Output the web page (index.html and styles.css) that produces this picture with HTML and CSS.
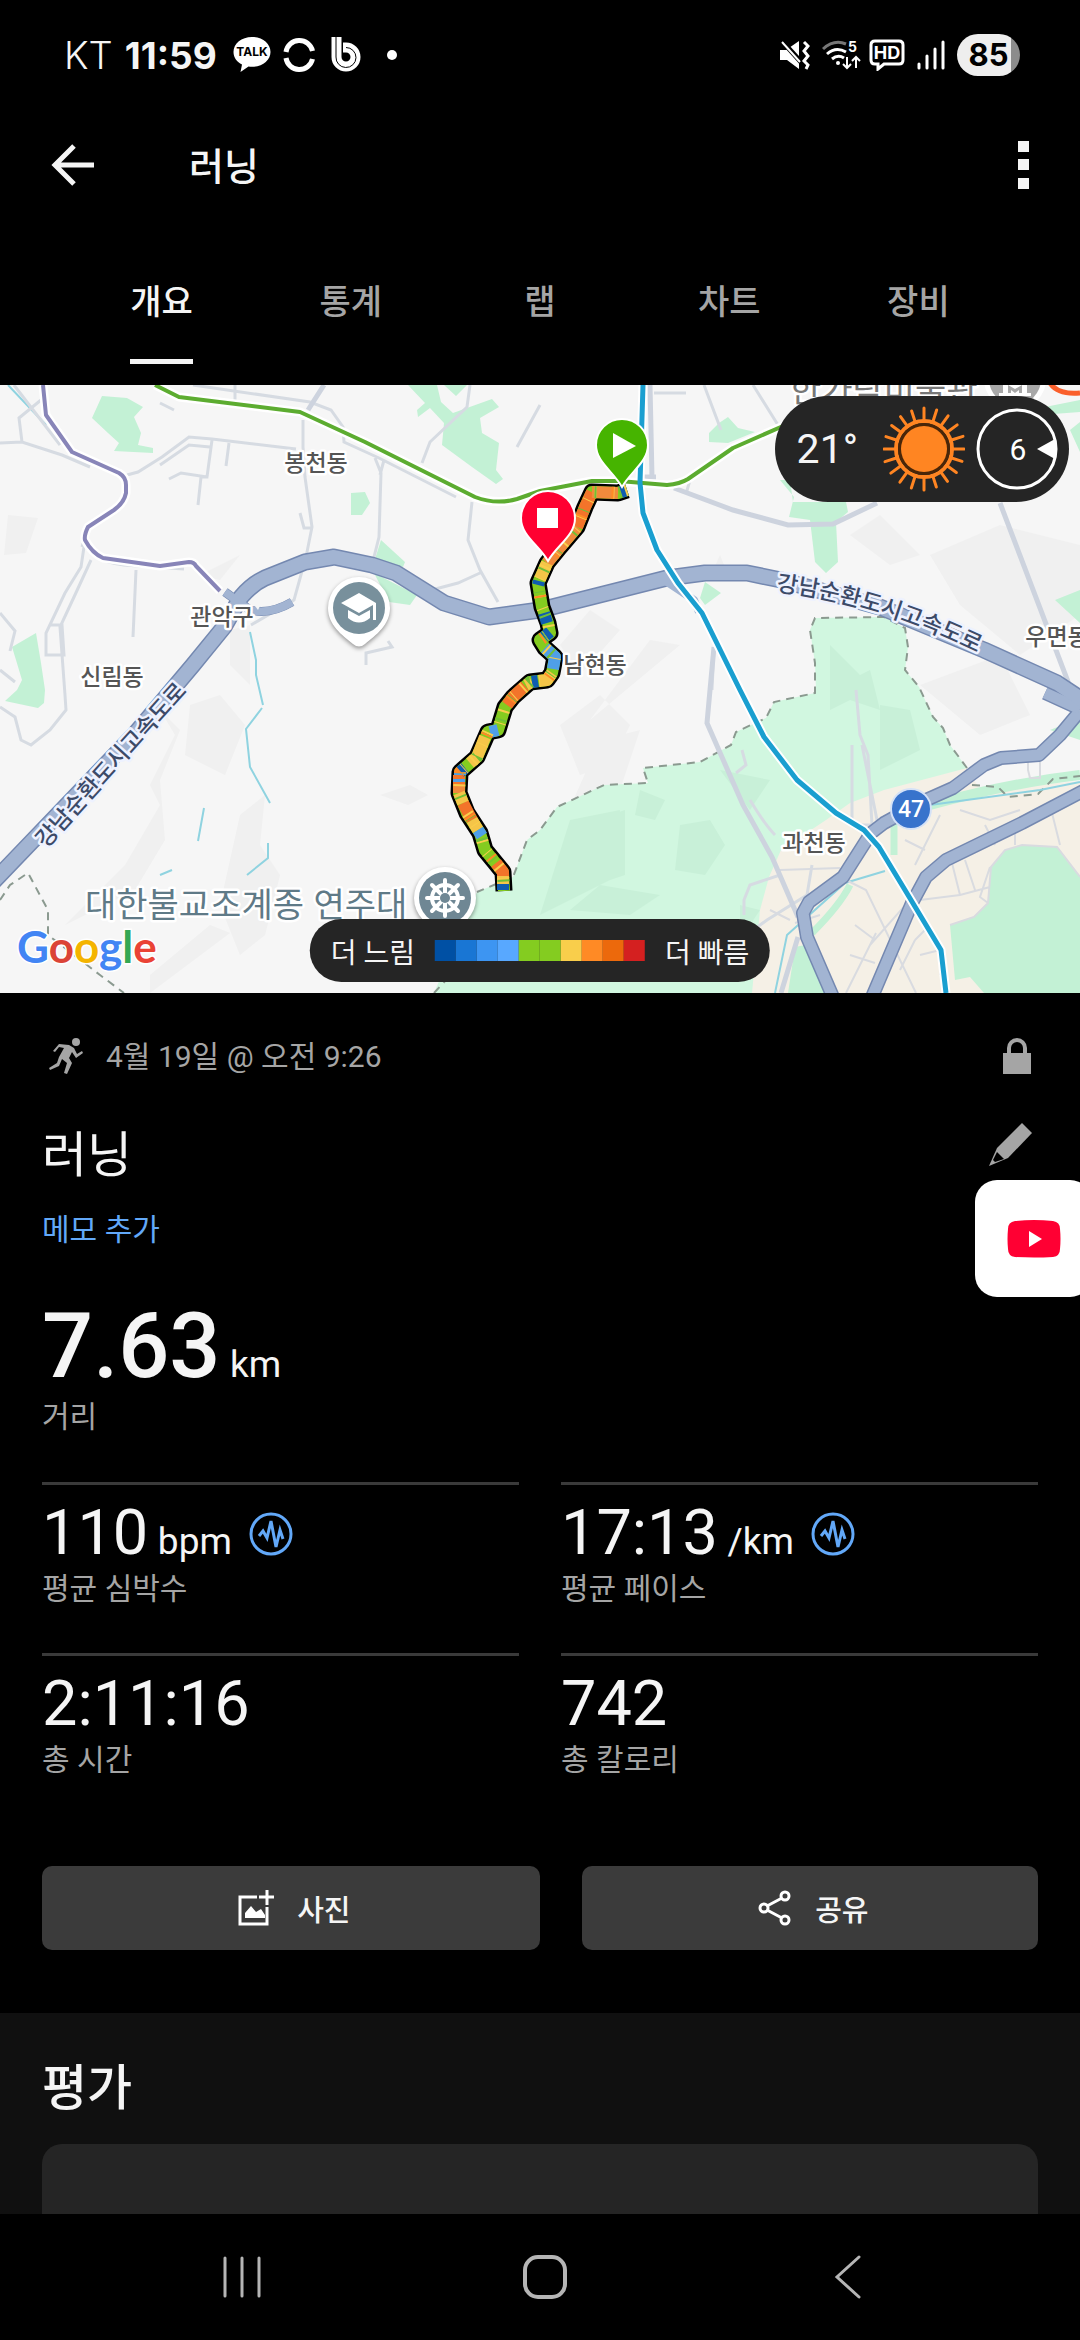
FILE: index.html
```html
<!DOCTYPE html>
<html lang="ko">
  <head>
    <meta charset="UTF-8" />
    <meta name="viewport" content="width=device-width, initial-scale=1.0" />
    <link rel="stylesheet" href="styles.css">
    <title>러닝</title>
  </head>
  <body>
    <div class="status">
      <span class="carrier">KT</span>
      <span class="clock">11:59</span>
      <svg class="talk" width="38" height="38" viewBox="0 0 38 38">
        <path d="M19 1C8.500 1 0.500 7.500 0.500 16c0 5.500 3.500 10 8.500 12.500L7.500 36l8-5.500c1 .2 2.300.3 3.500.3 10.500 0 18.500-6.500 18.500-14.800S29.500 1 19 1z" fill="#fff" />
        <text x="19" y="20" text-anchor="middle" class="talk-text">TALK</text>
      </svg>
      <svg width="32" height="34" viewBox="0 0 32 34" fill="none" stroke="#fff" stroke-width="5">
        <path d="M3 14A13.500 13.500 0 0 1 29.500 13" />
        <path d="M3 20A13.500 13.500 0 0 0 29.500 21" />
      </svg>
      <svg class="app-b" width="30" height="36" viewBox="0 0 30 36" fill="none">
        <path d="M5.500 0V20A9.500 9.500 0 1 0 15 10.500H12" stroke="#fff" stroke-width="10" />
        <path d="M5 0V20A10 10 0 1 0 15 10.500" stroke="#000" stroke-width="1" />
        <circle cx="15" cy="21" r="3" fill="#000" />
      </svg>
      <span class="more-dot"></span>
      <span class="spacer"></span>
      <svg width="30" height="30" viewBox="0 0 30 30" fill="#fff">
        <path d="M0 10h6l13-9v28L7 20H0z" />
        <path d="M1 0l20 22" stroke="#000" stroke-width="5" />
        <path d="M2 2l18 20" stroke="#fff" stroke-width="2" />
        <path d="M24 2l4 4-4 5 4 5-4 5 4 4-2 4" stroke="#fff" stroke-width="3" fill="none" />
      </svg>
      <svg class="wifi" width="40" height="30" viewBox="0 0 40 30" fill="none" stroke="#fff" stroke-width="3">
        <path d="M1 9Q12-1 24 4" stroke="#777" />
        <path d="M5 14Q14 6 24 12" />
        <path d="M10 19Q16 14 22 18" />
        <circle cx="16" cy="23" r="2" fill="#fff" stroke="none" />
        <path d="M25 17v11M21 24l4 4 4-4M34 28V17M30 21l4-4 4 4" stroke-width="2" />
        <text x="26" y="12" class="wifi-text">5</text>
      </svg>
      <svg width="36" height="32" viewBox="0 0 36 32" fill="none" stroke="#fff" stroke-width="3">
        <path d="M6 2h24q4 0 4 4v15q0 4-4 4H15l-6 5v-5H6q-4 0-4-4V6q0-4 4-4z" />
        <text x="18" y="20" text-anchor="middle" class="hd-text">HD</text>
      </svg>
      <svg class="signal" width="28" height="30" viewBox="0 0 28 30" stroke="#fff" stroke-width="3" stroke-linecap="round">
        <path d="M2 24v4M10 16v12M18 9v19M26 2v26" />
      </svg>
      <span class="battery">85</span>
    </div>

    <header class="appbar">
      <button class="icon-btn" aria-label="뒤로">
        <svg width="44" height="42" viewBox="0 0 44 42" fill="none" stroke="#f5f5f5" stroke-width="5">
          <path d="M43 21H4M23 2L4 21l19 19" />
        </svg>
      </button>
      <h1>러닝</h1>
      <button class="icon-btn" aria-label="메뉴">
        <svg width="11" height="48" viewBox="0 0 11 48" fill="#f5f5f5">
          <path d="M0 0h11v11H0zM0 18h11v11H0zM0 37h11v11H0z" />
        </svg>
      </button>
    </header>

    <nav class="tabs">
      <a href="#overview" class="active">개요</a>
      <a href="#stats">통계</a>
      <a href="#laps">랩</a>
      <a href="#charts">차트</a>
      <a href="#gear">장비</a>
    </nav>

    <div class="map">
      <svg class="map-canvas" viewBox="0 0 1080 608">
        <defs>
          <path id="highway" d="M-8 498L134 350 193 280 224 242 241 212Q252 199 265 193L305 177 334 172 372 180 396 188 444 218 489 232 540 225 667 193 705 188 747 188 781 195 880 222 984 265 1057 298 1090 320" />
          <path id="route-line" d="M627 105L618 108 592 107 585 122 577 142 560 162 547 178 538 198 542 222 548 238 550 248 540 255 545 263 555 272 552 288 547 295 530 297 513 312 505 322 498 345 488 347 477 372 460 387 459 408 467 428 480 448 485 465 503 487 504 506" />
          <path id="label-east" d="M776 206Q880 218 994 276" />
          <path id="label-west" d="M46 464L208 284" />
        </defs>
        <rect width="1080" height="608" fill="#f6f6f6" />

        <!-- terrain -->
        <g fill="#f0f0f0">
          <path d="M8 130l30 3-12 35-22 2zM240 170l-40 20 20 5zM160 325l15 25-25 50 10 20-35 60-60 60 20-10 50-25 30-50-5-60 20-50zM190 320l30-10 25 30-20 50-40-20zM240 430l25-20-5 50 20 30-15 60-25 20-20-50zM380 410l30-10 18 10-20 10zM560 340l40-30 30 30-20 40-30 10zM600 355l40-10-20 60-60 40zM680 260l-30-5-60 80zM930 170l70-30 80 20v70l-60 40-60-50zM850 150l30-20 40 40-30 10zM560 260l30-35 30 20-40 45zM920 300l80-30 30 60-50 20zM150 590l60-50 20 8-80 60zM230 245l20-5v60l-20-20zM720 170l10 25-20-3z" />
        </g>

        <!-- parks and built-up area -->
        <g fill="#c3f1d5">
          <path d="M102 11l25 2 16 9-9 10 7 16-3 12 15 3v5l-39-2 5-8-11-10-16-15zM408 0h29l4 17 12 11 39-14 7 8-19 11 2 15 17 10-3 27 7 9-7 5-24-17-30-22 2-22-14-15-12 9-1-7 8-7zM444 0h23l-11 11zM351 108l14-1 5 11-8 12h-11zM381 155l24 22-2 5-28-8zM374 188l43 22-7 10-21-3zM12 262l24-14 5 30 4 27-1 13-6 5-33-7 12-11 5-10-6-20zM709 48l10-10 9-6 10 11 17 4-27 11-19-1zM780 95h10l3 22h53l2 10-12 10 2 40-12 11-11-11-5-42-21-3 5-20zM705 197l16 11-16 12-5-7zM1055 215l25-10v33zM1070 45l10-8v30zM1030 25l50-10v12l-40 3z" />
        </g>
        <path d="M815 233L884 232 905 243 908 262 905 285 919 302 933 332 943 343 950 360 967 383V608H434L477 507 513 492 527 455 540 445 557 422 604 400 648 398 643 383 700 377 731 360 736 347 766 333 774 317 815 308 816 305 815 278 810 245z" fill="#d1f7e0" />
        <g fill="#c8f0d8">
          <path d="M570 435l50-10-10 70-70 35zM610 430l15-5v65l-15 5zM680 440l30-5 15 25-20 30-30-5zM640 405l25 10-10 20-20-5zM600 500l60 10-30 20-60-5zM740 520l20 5-20 30zM880 320l30 5 10 40-40 20zM720 385l50 10-20 30zM830 260l30 30 10-5 10 40-30-10-20 10z" />
        </g>
        <path d="M967 383L884 405 850 418 826 435 781 465 769 492 760 525 752 608H1090V395L980 405z" fill="#f5f0e6" />
        <path d="M1080 492L1057 462 1022 460 1005 465 991 482 988 518 974 532 950 540 955 595 970 592 984 608H1080z" fill="#c3f1d5" />
        <path d="M795 562l20-4 18 50h-45z" fill="#c3f1d5" />
        <path d="M930 420Q1010 398 1080 390" stroke="#c3f1d5" stroke-width="10" fill="none" />
        <path d="M812 548Q840 520 850 500M894 438v32" stroke="#c3f1d5" stroke-width="7" fill="none" />
        <path d="M1050 345l30-12v22z" fill="#c3f1d5" />
        <g fill="none" stroke="#8b9a90" stroke-width="2" stroke-dasharray="8 6">
          <path d="M967 383L950 360 943 343 933 332 919 302 905 285 908 262 905 243 884 232 815 233 810 245 815 278 815 308 774 317 766 333 736 347 731 360 700 377 643 383 648 398 604 400 557 422 540 445 527 455 513 492 477 507M434 608L460 580M0 515L10 500 28 488 48 525 48 550 100 590 124 608M972 400l26 2 10 10 30-3 15-15 27-3" />
        </g>

        <!-- streams -->
        <g fill="none" stroke="#8fd3e0" stroke-width="2">
          <path d="M8 0L46 40M250 247l6 28v15l7 30M262 323l-16 21 4 38 20 36M204 423l-6 33M268 458v15l-21 17M172 485l-12 5M1080 397L1040 405 930 420M775 608l12-58 58-52 40-12" />
        </g>

        <!-- minor roads -->
        <g fill="none" stroke="#d6dbe2" stroke-width="3">
          <path d="M0 58L22 57 62 70 90 82M41 15L19 33 22 57M14 0L60 60M127 90L138 87 162 72 189 52 212 54 296 64M212 55L207 92 201 92 198 120M169 94L181 88 207 92M160 80L189 60 210 62M229 58L226 81M160 18l14 7" />
          <path d="M303 35L303 62 305 92 312 142 306 172 294 215 251 240M193 0L310 17 331 25 343 42 344 57 379 73 456 112M235 0v15M375 73L381 88 379 152 370 188M384 75L380 90M470 0L467 22 430 57 422 78M540 20L517 62M472 117L468 155 480 185 498 217M480 188L458 198 424 207M300 128l4 15h9" />
          <path d="M84 162L81 182 65 208 46 248V270H64L62 240H50M91 175L74 212 60 242 65 310 66 325 50 345 31 360 21 355 15 332 0 322M136 185L133 252M88 142l-6 20M0 228l15 18-5 20M0 285l15 12M366 280v-12l26-6-4-6M84 150q0 25 40 30l60 4" />
          <path d="M654 8h32M704 0L721 45M753 0L778 40M690 95l-4 14M714 262l-2 43M856 305l4 45 8 20 4 70M852 360v80M862 360l16 80M850 440h26M742 365l4 15-10 8M750 415q15 25 25 35M780 490l-30 10-6 15v15M812 480l-5 30-40 25-14 10" />
        </g>
        <g fill="none" stroke="#d9dbe0" stroke-width="2">
          <path d="M846 495l20 10 50 103M920 515l40-5 30-8M870 560l40-45 20-30M846 608l30-60M905 455l20 10M940 430l-25 50M950 470l10 40M985 440l10 20M960 425l30 10 30-10M1015 435v25M1050 420l10 40M965 475l10 30M780 485l60-2M770 525l20 10M820 530l-25 8M855 540l20 15M850 570l25 8M915 555l15-15M920 570l20-5v25M900 585l15-30M1028 385v-10h12v18h-10zM990 482l-10 30 8 6M950 540l24-8 14-14 3-36 14-17 17-5 35 2 23 30" />
        </g>

        <!-- main roads -->
        <g fill="none" stroke="#cdd3de" stroke-width="5">
          <path d="M324 0L308 25M650 0L652 92M674 103L733 125 788 140 833 139 877 118M1000 118L1070 302 1080 315M710 305L707 338 743 420 772 472 798 532M798 552L781 608M714 262L710 305M656 92h-12" />
        </g>

        <!-- expressways -->
        <g fill="none" stroke-linejoin="round">
          <g stroke="#7488b0" stroke-width="14">
            <path d="M1080 326L1060 350 1039 370 1001 373 984 380 953 403 926 415 884 438 871 448 843 492 809 517 803 528 807 552 833 612" />
            <path d="M1085 405L1022 438 946 475 926 492 912 518 872 612M1045 308l35 16" />
            <path d="M225 207l25 18M250 225q20 5 42-8" stroke-width="9" />
            <use href="#highway" stroke-width="17" />
          </g>
          <g stroke="#a2b4d2" stroke-width="11">
            <path d="M1080 326L1060 350 1039 370 1001 373 984 380 953 403 926 415 884 438 871 448 843 492 809 517 803 528 807 552 833 612" />
            <path d="M1085 405L1022 438 946 475 926 492 912 518 872 612M1045 308l35 16" />
            <path d="M225 207l25 18M250 225q20 5 42-8M664 195l30 20 5 12" stroke-width="8" />
            <use href="#highway" stroke-width="14" />
          </g>
        </g>
        <path d="M252 217l10 0-4 8z" fill="#f6f6f6" />

        <!-- subway lines -->
        <g fill="none" stroke-linejoin="round">
          <g stroke="#fff" stroke-width="9">
            <path d="M43 0L46 30 72 67 119 88Q126 92 126 100V108Q124 118 114 125L88 142Q84 150 85 155 92 168 103 173L160 181 189 177Q194 177 196 181L220 206" />
            <path d="M155 0L179 12 300 27 365 57 475 112Q496 120 517 114L540 106 592 96H619L667 100Q680 99 688 94L733 63 790 38" />
            <path d="M643 0L640 98 643 128 657 165 678 198 702 228 740 305 764 352 797 395 836 428 864 445 879 462 905 505 941 565 946 608" />
          </g>
          <path d="M43 0L46 30 72 67 119 88Q126 92 126 100V108Q124 118 114 125L88 142Q84 150 85 155 92 168 103 173L160 181 189 177Q194 177 196 181L220 206" stroke="#8885b8" stroke-width="4" />
          <path d="M155 0L179 12 300 27 365 57 475 112Q496 120 517 114L540 106 592 96H619L667 100Q680 99 688 94L733 63 790 38" stroke="#5cac30" stroke-width="4" />
          <path d="M643 0L640 98 643 128 657 165 678 198 702 228 740 305 764 352 797 395 836 428 864 445 879 462 905 505 941 565 946 608" stroke="#1a9fd0" stroke-width="5" />
          <path d="M1050-2Q1058 10 1080 8" stroke="#fa5f2b" stroke-width="5" />
        </g>

        <!-- recorded track coloured by pace -->
        <g fill="none" stroke-linejoin="round">
          <use href="#route-line" stroke="#000" stroke-width="17" />
          <use href="#route-line" stroke="#84cc20" stroke-width="12" />
          <g stroke="#f3742a" stroke-width="12">
            <path d="M592 107L585 122 577 142M525 301L513 312 507 320M459 390V400M463 418L472 435M496 478L503 487V491" />
            <path d="M618 108L592 107M577 142L560 162 547 178M459 400V408" stroke="#f08a3c" />
          </g>
          <path d="M547 178L540 194M552 288L547 295 539 296M532 297L526 300M459 408L463 418M472 435L478 445M503 491V499M485 352L477 372 470 378" stroke="#f5c548" stroke-width="12" />
          <path d="M539 196L538 200M544 228L547 238M550 247L544 252M538 296L532 297M465 383L460 387M503 499V505M627 105L621 107" stroke="#0f5cb0" stroke-width="12" />
          <path d="M545 263L555 272 553 284M498 345L490 347M460 387V390M478 445L482 451M459 394V397" stroke="#4f9fe8" stroke-width="12" />
          <use href="#route-line" stroke="#f9ce4b" stroke-width="12" stroke-dasharray="2 11 1 17" />
          <use href="#route-line" stroke="#6fbf36" stroke-width="12" stroke-dasharray="0 7 1 23 2 15" />
          <use href="#route-line" stroke="#ff8a25" stroke-width="12" stroke-dasharray="0 14 2 31" />
        </g>

        <!-- place names -->
        <g class="place">
          <text x="316" y="86">봉천동</text>
          <text x="222" y="240">관악구</text>
          <text x="112" y="300">신림동</text>
          <text x="595" y="288">남현동</text>
          <text x="814" y="466">과천동</text>
          <text x="1057" y="260">우면동</text>
        </g>
        <text class="road"><textPath href="#label-east">강남순환도시고속도로</textPath></text>
        <text class="road"><textPath href="#label-west">강남순환도시고속도로</textPath></text>
        <text x="85" y="532" class="poi">대한불교조계종 연주대</text>
        <text x="790" y="17" class="poi museum">한가람미술관</text>

        <!-- museum -->
        <circle cx="1015" cy="-6" r="31" fill="#fff" />
        <circle cx="1015" cy="-6" r="26" fill="#a8a8a8" />
        <path d="M1003-6h24v14h4v3h-32V8h4zM1008 8V0l7 4 7-4v8h-3V5l-4 3-4-3v3z" fill="#fff" fill-rule="evenodd" />

        <!-- university -->
        <path d="M359 192a31 31 0 0 1 31 31c0 17-14 27-25 36q-6 5-12 0c-11-9-25-19-25-36a31 31 0 0 1 31-31z" fill="#fff" class="shadow" />
        <circle cx="359" cy="223" r="26" fill="#78909c" />
        <path d="M359 208l-18 10 18 10 14-8v15h3v-17zM348 225v8q11 9 22 0v-8l-11 6z" fill="#fff" />

        <!-- temple -->
        <circle cx="445" cy="513" r="31" fill="#fff" class="shadow" />
        <circle cx="445" cy="513" r="26" fill="#6f8794" />
        <g fill="none" stroke="#fff" stroke-width="4">
          <circle cx="445" cy="513" r="13" />
          <path d="M445 495v36M427 513h36M432 500l26 26M432 526l26-26" stroke-linecap="round" />
        </g>
        <circle cx="445" cy="513" r="5" fill="#6f8794" />

        <circle cx="911" cy="424" r="20" fill="#3873cc" stroke="#d5e2f7" stroke-width="2" />
        <text x="911" y="432" class="shield">47</text>

        <!-- start and finish -->
        <path d="M622 102C613 86 596 77 596 60a26 26 0 0 1 52 0c0 17-17 26-26 42z" fill="#46b400" stroke="#fff" stroke-width="2" />
        <path d="M613 48v25l23-12z" fill="#fff" />
        <path d="M548 176C539 160 521 151 521 133a27 27 0 0 1 54 0c0 18-18 27-27 43z" fill="#ff0031" stroke="#fff" stroke-width="2" />
        <path d="M537 123h21v20h-21z" fill="#fff" />

        <text x="17" y="578" class="google"><tspan fill="#4285f4">G</tspan><tspan fill="#db4437">o</tspan><tspan fill="#f4b400">o</tspan><tspan fill="#4285f4">g</tspan><tspan fill="#34a853">l</tspan><tspan fill="#ea4335">e</tspan></text>
      </svg>

      <div class="weather">
        <span>21°</span>
        <svg width="82" height="86" viewBox="-41 -43 82 86">
          <g stroke="#ff8522" stroke-width="3" stroke-linecap="round">
            <path id="ray" d="M0-29V-41M0 29V41M29 0H40M-29 0H-40" />
            <use href="#ray" transform="rotate(18)" />
            <use href="#ray" transform="rotate(36)" />
            <use href="#ray" transform="rotate(54)" />
            <use href="#ray" transform="rotate(72)" />
          </g>
          <circle r="28" fill="none" stroke="#ff8522" stroke-width="4" />
          <circle r="26" fill="#4a2608" />
          <circle r="23" fill="#ff8522" />
        </svg>
        <svg width="82" height="82" viewBox="-41 -41 82 82">
          <circle r="39" fill="none" stroke="#fff" stroke-width="3" />
          <path d="M20 0l18-10v20z" fill="#fff" />
          <text x="1" y="11" class="wind">6</text>
        </svg>
      </div>

      <div class="legend">
        <span>더 느림</span>
        <div class="scale">
          <i class="s1"></i><i class="s2"></i><i class="s3"></i><i class="s4"></i><i class="s5"></i><i class="s5"></i><i class="s6"></i><i class="s7"></i><i class="s8"></i><i class="s9"></i>
        </div>
        <span>더 빠름</span>
      </div>
    </div>

    <main class="summary" id="overview">
      <div class="row meta">
        <svg width="34" height="36" viewBox="0 0 34 36" fill="#a5a5a5">
          <circle cx="27" cy="4" r="4" />
          <path d="M10 6l10 1 5 3 3 6 5-3 1 2-7 5-4-6-3 6 3 5-5 11-3-1 3-10-5-4-3 7-9 4-1-2 8-5 2-6 5-9-5-1-4 5-2-1z" />
        </svg>
        <span>4월 19일 @ 오전 9:26</span>
        <svg class="end" width="28" height="36" viewBox="0 0 28 36" fill="#a5a5a5">
          <path d="M0 15h28v21H0z" />
          <path d="M6 16V10a8 8 0 0 1 16 0v6" fill="none" stroke="#a5a5a5" stroke-width="4" />
        </svg>
      </div>

      <div class="row name">
        <h2>러닝</h2>
        <button class="edit" aria-label="이름 편집">
          <svg width="44" height="44" viewBox="0 0 44 44">
            <path d="M33 0L43 10 19 35 0 43 8 25z" fill="#a5a5a5" />
            <path d="M8 29l7 7-9 3-2-2z" fill="#000" />
          </svg>
        </button>
      </div>

      <a class="memo" href="#memo">메모 추가</a>

      <div class="distance">
        <p class="value"><b>7.63</b> <small>km</small></p>
        <p class="label">거리</p>
      </div>

      <div class="stats">
        <div class="stat">
          <p class="value">110 <small>bpm</small>
            <svg class="pulse" width="46" height="46" viewBox="0 0 46 46"><circle cx="23" cy="23" r="20" /><path d="M11 25l4-5 4 7 4-17 5 26 4-17 3 9" /></svg>
          </p>
          <p class="label">평균 심박수</p>
        </div>
        <div class="stat">
          <p class="value">17:13 <small>/km</small>
            <svg class="pulse" width="46" height="46" viewBox="0 0 46 46"><circle cx="23" cy="23" r="20" /><path d="M11 25l4-5 4 7 4-17 5 26 4-17 3 9" /></svg>
          </p>
          <p class="label">평균 페이스</p>
        </div>
        <div class="stat">
          <p class="value">2:11:16</p>
          <p class="label">총 시간</p>
        </div>
        <div class="stat">
          <p class="value">742</p>
          <p class="label">총 칼로리</p>
        </div>
      </div>

      <div class="actions">
        <button>
          <svg width="36" height="36" viewBox="0 0 36 36" fill="none" stroke="#fff" stroke-width="3">
            <path d="M19 7H2v27h27V17M29 0v15M21 7h15" />
            <path d="M7 28v-5l6-7 5 6 5-3 4 6v3z" fill="#fff" stroke="none" />
          </svg>
          사진
        </button>
        <button>
          <svg width="34" height="36" viewBox="0 0 34 36" fill="none" stroke="#fff" stroke-width="3">
            <circle cx="27" cy="6" r="4" /><circle cx="6" cy="18" r="4" /><circle cx="27" cy="30" r="4" />
            <path d="M9 16L24 8M9 20l15 8" />
          </svg>
          공유
        </button>
      </div>
    </main>

    <section class="rating">
      <h2>평가</h2>
      <div class="card"></div>
    </section>

    <nav class="system-nav">
      <button aria-label="최근 앱">
        <svg width="40" height="42" viewBox="0 0 40 42" stroke="#b5b5b5" stroke-width="3" stroke-linecap="round"><path d="M3 2v38M20 2v38M37 2v38" /></svg>
      </button>
      <button aria-label="홈">
        <svg width="44" height="44" viewBox="0 0 44 44" fill="none" stroke="#b5b5b5" stroke-width="4"><rect x="2" y="2" width="40" height="40" rx="13" /></svg>
      </button>
      <button aria-label="이전">
        <svg width="28" height="44" viewBox="0 0 28 44" fill="none" stroke="#b5b5b5" stroke-width="3" stroke-linecap="round"><path d="M25 2L3 22l22 20" /></svg>
      </button>
    </nav>

    <button class="edge-app" aria-label="YouTube">
      <svg width="54" height="38" viewBox="0 0 54 38">
        <path d="M8 1Q27-1 46 1 53 2 53 9q1 10 0 20 0 7-7 8-19 1-38 0-7-1-7-8-1-10 0-20 0-7 7-8z" fill="#ff0033" />
        <path d="M22 11v16l13-8z" fill="#fff" />
      </svg>
    </button>
  </body>
</html>
```
FILE: styles.css
```css
* {
  box-sizing: border-box;
}

body {
  margin: 0;
  min-height: 100vh;
  display: flex;
  flex-direction: column;
  position: relative;
  background: #000;
  color: #f5f5f5;
  font-family: Roboto, "Noto Sans CJK KR", sans-serif;
  overflow-x: hidden;
}

h1,
h2,
p {
  margin: 0;
  font-weight: 500;
}

svg {
  flex: none;
}

button {
  border: 0;
  padding: 0;
  background: none;
  color: inherit;
  font: inherit;
  display: flex;
  align-items: center;
  justify-content: center;
}

a {
  text-decoration: none;
}

/* status bar */
.status {
  height: 110px;
  padding: 0 60px 0 64px;
  display: flex;
  align-items: center;
  gap: 12px;
  font-family: Inter, sans-serif;
  font-size: 38px;
}

.carrier {
  font-weight: 300;
}

.clock {
  font-weight: 700;
  font-size: 37px;
}

.talk {
  margin-left: 4px;
}

.talk-text {
  font: 700 12px Inter, sans-serif;
}

.app-b {
  margin-left: 4px;
}

.more-dot {
  width: 10px;
  height: 10px;
  margin-left: 14px;
  border-radius: 50%;
  background: #fff;
}

.spacer {
  flex: 1;
}

.wifi {
  margin-right: -5px;
}

.wifi-text,
.hd-text {
  font: 700 14px Inter, sans-serif;
  fill: #fff;
  stroke: none;
}

.hd-text {
  font-size: 18px;
}

.battery {
  width: 63px;
  height: 42px;
  border-radius: 21px;
  background: linear-gradient(90deg, #eee 85%, #8c8c8c 85%);
  color: #000;
  font-size: 31px;
  font-weight: 700;
  line-height: 42px;
  text-align: center;
}

/* app bar */
.appbar {
  height: 110px;
  padding: 0 51px;
  display: flex;
  align-items: center;
}

.appbar h1 {
  flex: 1;
  margin-left: 94px;
  padding-bottom: 4px;
  font-size: 38px;
}

.tabs {
  height: 165px;
  padding: 0 67px;
  display: grid;
  grid-template-columns: repeat(5, 1fr);
  justify-items: center;
}

.tabs a {
  height: 144px;
  padding-top: 21px;
  border-bottom: 5px solid transparent;
  color: #a5a5a5;
  font-size: 34px;
  font-weight: 500;
  line-height: 123px;
}

.tabs .active {
  color: #f5f5f5;
  border-color: #f5f5f5;
}

/* map */
.map {
  position: relative;
}

.map-canvas {
  display: block;
  width: 100%;
  height: auto;
}

.place,
.road,
.poi {
  font-family: "Noto Sans CJK KR", sans-serif;
  font-weight: 500;
  stroke: #fff;
  stroke-width: 5px;
  stroke-linejoin: round;
  paint-order: stroke;
}

.place {
  font-size: 23px;
  fill: #555;
  text-anchor: middle;
}

.road {
  font-size: 23px;
  fill: #3c4a68;
  stroke: #eef2ff;
}

.poi {
  font-size: 34px;
  font-weight: 400;
  fill: #5f7a87;
}

.museum {
  fill: #777;
}

.shadow {
  filter: drop-shadow(0 2px 2px rgba(0, 0, 0, 0.4));
}

.shield {
  font: 500 23px Roboto, sans-serif;
  fill: #fff;
  text-anchor: middle;
}

.google {
  font: 700 44px Lato, sans-serif;
  stroke: #fff;
  stroke-width: 3px;
  paint-order: stroke;
}

.weather {
  position: absolute;
  top: 11px;
  right: 11px;
  height: 106px;
  padding: 0 11px 0 22px;
  display: flex;
  align-items: center;
  gap: 11px;
  border-radius: 53px;
  background: #252525;
  font-size: 41px;
}

.weather span {
  margin-right: 14px;
}

.wind {
  font-size: 30px;
  fill: #fff;
  text-anchor: middle;
}

.legend {
  position: absolute;
  bottom: 11px;
  left: 50%;
  transform: translateX(-50%);
  height: 63px;
  padding: 0 21px;
  display: flex;
  align-items: center;
  gap: 20px;
  border-radius: 32px;
  background: #252525;
  font-size: 28px;
  white-space: nowrap;
}

.scale {
  display: flex;
}

.scale i {
  width: 21px;
  height: 21px;
}

.s1 { background: #0050a4; }
.s2 { background: #1976d4; }
.s3 { background: #3d95f2; }
.s4 { background: #58a8ff; }
.s5 { background: #84cc20; }
.s6 { background: #f9ce4b; }
.s7 { background: #ff8a25; }
.s8 { background: #ec690c; }
.s9 { background: #d42020; }

/* activity summary */
.summary {
  padding: 42px 42px 63px;
}

.row {
  display: flex;
  align-items: center;
}

.meta {
  height: 42px;
  padding: 0 7px;
  gap: 23px;
  color: #a5a5a5;
  font-size: 30px;
}

.meta span {
  padding-bottom: 4px;
}

.end {
  margin-left: auto;
}

.name {
  height: 70px;
  margin-top: 38px;
  padding-right: 5px;
  justify-content: space-between;
}

h2 {
  font-size: 49px;
}

.name h2 {
  font-weight: 400;
}

.edit {
  margin-bottom: 10px;
}

.memo {
  display: block;
  margin-top: 23px;
  color: #62a8f8;
  font-size: 30px;
  line-height: 44px;
}

.value {
  height: 71px;
  font-size: 63px;
  font-weight: 400;
  line-height: 74px;
}

.value b {
  font-size: 90px;
  font-weight: 500;
}

.value small {
  margin-left: -6px;
  font-size: 37px;
}

.label {
  color: #a5a5a5;
  font-size: 30px;
  font-weight: 400;
  line-height: 44px;
}

.distance {
  margin-top: 47px;
}

.distance .value {
  height: 96px;
  line-height: 96px;
}

.stats {
  margin-top: 43px;
  display: grid;
  grid-template-columns: 1fr 1fr;
  column-gap: 42px;
}

.stat {
  height: 171px;
  padding-top: 11px;
  border-top: 3px solid #3a3a3a;
}

.pulse {
  vertical-align: -3px;
  fill: none;
  stroke: #62a8f8;
  stroke-width: 3px;
}

.actions {
  margin-top: 42px;
  display: grid;
  grid-template-columns: 12fr 11fr;
  gap: 42px;
}

.actions button {
  height: 84px;
  padding-left: 7px;
  gap: 23px;
  border-radius: 10px;
  background: #3b3b3b;
  font-size: 29px;
  font-weight: 500;
}

/* rating */
.rating {
  flex: 1;
  padding: 41px 42px 0;
  display: flex;
  flex-direction: column;
  background: #101010;
}

.rating h2 {
  line-height: 70px;
}

.card {
  flex: 1;
  margin-top: 20px;
  border-radius: 20px 20px 0 0;
  background: #252525;
}

/* system bars */
.system-nav {
  height: 126px;
  padding: 0 81px 0 91px;
  display: grid;
  grid-template-columns: repeat(3, 1fr);
  background: #000;
}

.edge-app {
  position: absolute;
  top: 1180px;
  right: -12px;
  width: 117px;
  height: 117px;
  border-radius: 22px;
  background: #fff;
}
```
